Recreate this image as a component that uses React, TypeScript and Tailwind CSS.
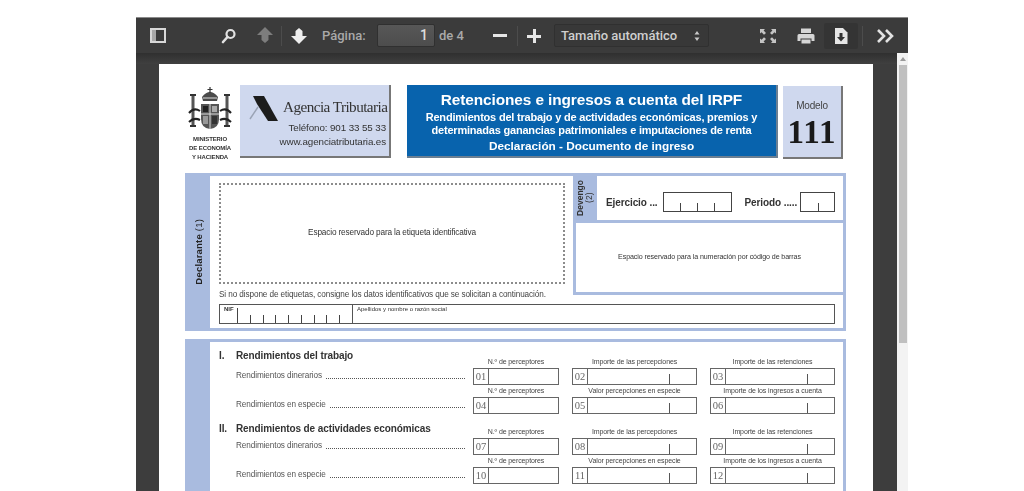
import { ReactNode } from 'react';

const band = 'bg-[#a9bbdf]';

function Sep() {
    return <div className="w-px h-[20px] bg-[#2a2a2a] border-r border-[#4c4c4c]"></div>;
}

function Toolbar() {
    return (
        <div className="relative z-10 h-[36px] shrink-0 flex items-center bg-[#3b3b3b] border-t border-[#8a8a8a] text-[#d4d4d4] font-['Roboto',sans-serif] font-medium whitespace-nowrap">
            <svg className="ml-[14px] w-[16px] h-[15px]" viewBox="0 0 16 15">
                <rect x="1" y="1" width="14" height="13" fill="none" stroke="#d8d8d8" strokeWidth="2" />
                <rect x="2" y="2" width="4" height="11" fill="#a8a8a8" />
            </svg>
            <svg className="ml-[55px] w-[16px] h-[16px]" viewBox="0 0 16 16">
                <circle cx="9.5" cy="6" r="4" fill="none" stroke="#e2e2e2" strokeWidth="2.2" />
                <path d="M6.5 9 L2 14" stroke="#e2e2e2" strokeWidth="2.6" strokeLinecap="round" />
            </svg>
            <svg className="ml-[20px] w-[16px] h-[17px]" viewBox="0 0 16 17">
                <path d="M8 0 L16 8 H11.5 V13 L8 16 L4.5 13 V8 H0 Z" fill="#7d7d7d" />
            </svg>
            <div className="ml-[8px]"><Sep /></div>
            <svg className="ml-[9px] w-[16px] h-[17px]" viewBox="0 0 16 17">
                <path d="M8 17 L16 9 H11.5 V4 L8 1 L4.5 4 V9 H0 Z" fill="#eeeeee" />
            </svg>
            <span className="ml-[15px] w-[45px] text-[13px] text-[#a9a9a9]">Página:</span>
            <div className="ml-[10px] w-[58px] h-[23px] bg-gradient-to-b from-[#575757] to-[#4d4d4d] border border-[#303030] rounded-[2px] flex items-center justify-end pr-[6px] text-[14px] text-[#dddddd]">1</div>
            <span className="ml-[4px] w-[25px] text-[13px] text-[#a9a9a9]">de 4</span>
            <div className="ml-[29px] w-[14px] h-[3px] bg-[#e6e6e6]"></div>
            <div className="ml-[10px]"><Sep /></div>
            <div className="ml-[9px] relative w-[14px] h-[14px]">
                <div className="absolute left-0 top-[6px] w-[14px] h-[3px] bg-[#e6e6e6]"></div>
                <div className="absolute left-[6px] top-0 w-[3px] h-[14px] bg-[#e6e6e6]"></div>
            </div>
            <div className="ml-[13px] w-[155px] h-[23px] bg-[#383838] border border-[#303030] rounded-[2px] flex items-center justify-between pl-[6px] pr-[8px]">
                <span className="text-[13px] text-[#cfcfcf]">Tamaño automático</span>
                <svg className="w-[6px] h-[10px]" viewBox="0 0 6 10">
                    <path d="M3 0 L5.5 3.5 H0.5 Z M3 10 L0.5 6.5 H5.5 Z" fill="#c8c8c8" />
                </svg>
            </div>
            <svg className="ml-[50px] w-[18px] h-[16px]" viewBox="0 0 18 16">
                <path d="M1 1 H6 L4.6 2.4 L7 5 L5 6.8 L2.6 4.2 L1 5.6 Z M17 1 H12 L13.4 2.4 L11 5 L13 6.8 L15.4 4.2 L17 5.6 Z M1 15 H6 L4.6 13.6 L7 11 L5 9.2 L2.6 11.8 L1 10.4 Z M17 15 H12 L13.4 13.6 L11 11 L13 9.2 L15.4 11.8 L17 10.4 Z" fill="#c4c4c4" />
            </svg>
            <svg className="ml-[20px] w-[18px] h-[16px]" viewBox="0 0 18 16">
                <path d="M4 0.5 H14 V5 H4 Z M2 6 H16 Q17.5 6 17.5 7.5 V13 H14.5 V10.5 H3.5 V13 H0.5 V7.5 Q0.5 6 2 6 Z M4.5 11.5 H13.5 V15.5 H4.5 Z" fill="#d6d6d6" />
            </svg>
            <div className="ml-[9px] w-[34px] h-[26px] bg-[#343434] rounded-[2px] flex items-center justify-center">
                <svg className="w-[14px] h-[16px]" viewBox="0 0 14 16">
                    <path d="M1 0 H9 L13.5 4.5 V16 H1 Z" fill="#e6e6e6" />
                    <path d="M5.5 5 H8.5 V9 H11 L7 13.5 L3 9 H5.5 Z" fill="#333333" />
                    <path d="M9.5 0 H13.5 V4 Z" fill="#343434" />
                </svg>
            </div>
            <div className="ml-[4px]"><Sep /></div>
            <svg className="ml-[14px] w-[17px] h-[14px]" viewBox="0 0 17 14">
                <path d="M1 1 L7 7 L1 13 M9 1 L15 7 L9 13" fill="none" stroke="#e2e2e2" strokeWidth="2.6" />
            </svg>
        </div>
    );
}

function Crest() {
    return (
        <svg className="w-[44px] h-[46px]" viewBox="0 0 44 46">
            <path d="M14 10 Q22 0 30 10 L29 14 H15 Z" fill="#4a4a4a" />
            <path d="M22 0 V6 M19.5 2.5 H24.5" stroke="#333333" strokeWidth="1.2" />
            <path d="M15 11 H29" stroke="#dddddd" strokeWidth="1" />
            <path d="M13 17 H31 V32 Q31 41 22 42 Q13 41 13 32 Z" fill="#555555" />
            <path d="M22 17 V42 M13 27 H31" stroke="#dddddd" strokeWidth="1" />
            <rect x="15" y="19" width="5" height="6" fill="#222222" />
            <rect x="24" y="19" width="5" height="6" fill="#aaaaaa" />
            <rect x="15" y="29" width="5" height="8" fill="#999999" />
            <rect x="24" y="29" width="5" height="8" fill="#333333" />
            <path d="M5 8 V38 M39 8 V38" stroke="#555555" strokeWidth="3" />
            <path d="M1 26 Q6 20 12 24 M43 26 Q38 20 32 24 M1 35 Q6 30 12 33 M43 35 Q38 30 32 33" fill="none" stroke="#222222" strokeWidth="2" />
            <path d="M2 8 H8 M36 8 H42 M2 39 H8 M36 39 H42" stroke="#333333" strokeWidth="2" />
        </svg>
    );
}

function Header() {
    return (
        <div className="flex items-start h-[75px]">
            <div className="w-[44px] ml-[29px] mt-[2px] flex flex-col items-center">
                <Crest />
                <div className="mt-[2px] text-center text-[6px] leading-[9px] font-semibold text-[#333333] whitespace-nowrap tracking-[-0.1px]">MINISTERIO<br />DE ECONOMÍA<br />Y HACIENDA</div>
            </div>
            <div className="ml-[8px] w-[151px] h-[73px] bg-[#cfd8ee] border-r-2 border-b-2 border-[#777777] pt-[12px] pr-[3px] relative">
                <svg className="absolute left-[9px] top-[10px] w-[30px] h-[27px]" viewBox="0 0 30 27">
                    <path d="M4 1 H15 L29 26 H19 L8 9 Z" fill="#1c1c1c" />
                    <path d="M9 12 L1 24" stroke="#9aa3b5" strokeWidth="1.5" />
                </svg>
                <div className="pl-[43px] text-[15.2px] leading-[20px] tracking-[-0.55px] text-[#333333] whitespace-nowrap font-['Liberation_Serif',serif]">Agencia Tributaria</div>
                <div className="mt-[4px] text-right text-[9.8px] leading-[14px] tracking-[-0.1px] text-[#333333] whitespace-nowrap">Teléfono: 901 33 55 33<br />www.agenciatributaria.es</div>
            </div>
            <div className="ml-[16px] w-[371px] h-[73px] bg-[#0863ad] border-r-2 border-b-2 border-[#6b7f92] text-white font-bold text-center pt-[4px] whitespace-nowrap">
                <div className="text-[15.4px] leading-[21px] tracking-[-0.1px]">Retenciones e ingresos a cuenta del IRPF</div>
                <div className="mt-[1px] text-[11px] leading-[12.5px] tracking-[-0.2px]">Rendimientos del trabajo y de actividades económicas, premios y<br />determinadas ganancias patrimoniales e imputaciones de renta</div>
                <div className="mt-[3px] text-[11.8px] leading-[15px]">Declaración - Documento de ingreso</div>
            </div>
            <div className="ml-[5px] mt-[1px] w-[60px] h-[73px] bg-[#cfd8ee] border-r-2 border-b-2 border-[#777777] text-center pt-[14px]">
                <div className="text-[10px] leading-[12px] text-[#444444] tracking-[-0.2px]">Modelo</div>
                <div className="mt-[3px] text-[33px] leading-[34px] font-bold tracking-[1px] text-[#1a1a1a] font-['Liberation_Serif',serif]">111</div>
            </div>
        </div>
    );
}

function Ticks({ count, first }: { count: number; first?: boolean }) {
    return (
        <div className="flex-1 flex h-full">
            {Array.from({ length: count }).map((_, i) => (
                <div key={i} className="flex-1 flex flex-col justify-end">
                    {i === 0
                        ? first && <div className="h-[15px] border-l border-[#444444]"></div>
                        : <div className="h-[8px] border-l border-[#444444]"></div>}
                </div>
            ))}
        </div>
    );
}

function Declarante() {
    return (
        <div className={`mt-[13px] ml-[26px] w-[661px] flex ${band} p-[3px]`}>
            <div className="w-[22px] flex items-center justify-center">
                <span className="[writing-mode:vertical-rl] rotate-180 text-[9.5px] font-bold text-[#222222] tracking-[0.2px] whitespace-nowrap">Declarante <span className="font-normal">(1)</span></span>
            </div>
            <div className="flex-1 h-[152px] bg-white pt-[7px] pl-[9px] pr-[6px]">
                <div className="flex h-[101px]">
                    <div className="w-[346px] shrink-0">
                        <div className="h-[101px] border-2 border-dotted border-[#8c8c8c] flex items-center justify-center text-[8.25px] text-[#333333] tracking-[-0.15px]">Espacio reservado para la etiqueta identificativa</div>
                    </div>
                    <div className="ml-[8px] -mt-[7px] -mr-[6px] flex-1 h-[119px] flex flex-col">
                        <div className={`h-[47px] flex ${band} pb-[3px]`}>
                            <div className="w-[24px] flex items-center justify-center">
                                <span className="[writing-mode:vertical-rl] rotate-180 text-[8.5px] leading-[9px] text-center font-bold text-[#333333]">Devengo<br /><span className="font-normal">(2)</span></span>
                            </div>
                            <div className="flex-1 bg-white flex items-center pt-[8px] pl-[9px] text-[10px] font-bold text-[#333333] tracking-[-0.1px] whitespace-nowrap">
                                <span>Ejercicio ...</span>
                                <div className="ml-[5px] w-[69px] h-[20px] border border-[#444444] flex"><Ticks count={4} /></div>
                                <span className="ml-[13px]">Periodo .....</span>
                                <div className="ml-[3px] w-[35px] h-[20px] border border-[#444444] flex"><Ticks count={2} /></div>
                            </div>
                        </div>
                        <div className="h-[69px] bg-white border-l-[3px] border-[#a9bbdf] flex items-center justify-center text-[7.1px] text-[#333333] tracking-[-0.1px]">Espacio reservado para la numeración por código de barras</div>
                        <div className={`h-[3px] ${band}`}></div>
                    </div>
                </div>
                <div className="mt-[5px] text-[8.2px] leading-[11px] text-[#444444] tracking-[-0.1px] whitespace-nowrap">Si no dispone de etiquetas, consigne los datos identificativos que se solicitan a continuación.</div>
                <div className="mt-[4px] w-[616px] h-[20px] border border-[#555555] flex">
                    <div className="w-[133px] border-r border-[#555555] flex">
                        <span className="w-[17px] pl-[4px] text-[6px] font-bold leading-[8px] text-[#333333]">NIF</span>
                        <div className="flex-1 flex"><Ticks count={9} first /></div>
                    </div>
                    <span className="pl-[4px] text-[6px] leading-[9px] text-[#333333]">Apellidos y nombre o razón social</span>
                </div>
            </div>
        </div>
    );
}

function Box({ caption, num, wide }: { caption: string; num: string; wide?: boolean }) {
    return (
        <div className={wide ? 'w-[125px] ml-[13px]' : 'w-[86px]'}>
            <div className="h-[12px] text-center text-[7px] leading-[12px] text-[#444444] tracking-[-0.1px] whitespace-nowrap">{caption}</div>
            <div className="h-[17px] border border-[#666666] flex">
                <div className="w-[15px] border-r border-[#666666] text-[10.5px] leading-[15px] text-center text-[#666666] font-['Liberation_Serif',serif]">{num}</div>
                {wide && (
                    <div className="flex-1 pr-[26px] flex justify-end items-end">
                        <div className="h-[10px] border-l border-[#555555]"></div>
                    </div>
                )}
            </div>
        </div>
    );
}

function Row({ label, caps, nums }: { label: string; caps: string[]; nums: string[] }) {
    return (
        <div className="flex items-end">
            <div className="w-[229px] mr-[8px] flex items-end pb-[4px]">
                <span className="text-[8.2px] leading-[11px] text-[#555555] tracking-[-0.1px] whitespace-nowrap">{label}</span>
                <div className="flex-1 ml-[4px] mb-[2px] border-b border-dotted border-[#555555]"></div>
            </div>
            <Box caption={caps[0]} num={nums[0]} />
            <Box caption={caps[1]} num={nums[1]} wide />
            <Box caption={caps[2]} num={nums[2]} wide />
        </div>
    );
}

function Title({ num, children }: { num: string; children: ReactNode }) {
    return (
        <div className="flex items-center -ml-[17px] text-[10px] leading-[14px] font-bold text-[#333333] tracking-[-0.1px] whitespace-nowrap">
            <span className="w-[17px]">{num}</span>
            <span>{children}</span>
        </div>
    );
}

const dinerarios = ['N.º de perceptores', 'Importe de las percepciones', 'Importe de las retenciones'];
const especie = ['N.º de perceptores', 'Valor percepciones en especie', 'Importe de los ingresos a cuenta'];

function Rendimientos() {
    return (
        <div className={`mt-[8px] ml-[26px] w-[661px] flex ${band} pt-[3px] pl-[3px] pr-[3px]`}>
            <div className="w-[22px]"></div>
            <div className="flex-1 h-[160px] bg-white pt-[7px] pl-[26px]">
                <Title num="I.">Rendimientos del trabajo</Title>
                <div className="-mt-[7px]"><Row label="Rendimientos dinerarios" caps={dinerarios} nums={['01', '02', '03']} /></div>
                <Row label="Rendimientos en especie" caps={especie} nums={['04', '05', '06']} />
                <div className="mt-[8px]"><Title num="II.">Rendimientos de actividades económicas</Title></div>
                <div className="-mt-[10px]"><Row label="Rendimientos dinerarios" caps={dinerarios} nums={['07', '08', '09']} /></div>
                <Row label="Rendimientos en especie" caps={especie} nums={['10', '11', '12']} />
            </div>
        </div>
    );
}

function Scrollbar() {
    return (
        <div className="w-[11px] bg-[#f3f3f3] flex flex-col items-center">
            <div className="h-[12px] flex items-center justify-center">
                <div className="w-0 h-0 border-x-[3px] border-x-transparent border-b-[4px] border-b-[#9a9a9a]"></div>
            </div>
            <div className="w-[8px] h-[278px] bg-[#c0c0c0]"></div>
        </div>
    );
}

export default function App() {
    return (
        <div className="w-[1024px] h-[491px] overflow-hidden bg-white pt-[17px] pl-[136px]">
            <div className="w-[772px] h-[474px] flex flex-col bg-[#3d3d3d]">
                <Toolbar />
                <div className="flex-1 flex min-h-0">
                    <div className="flex-1 min-w-0 pt-[11px] pl-[23px] pr-[24px] overflow-hidden bg-no-repeat bg-gradient-to-b from-[#2f2f2f] to-[#404040] [background-size:100%_11px]">
                        <div className="h-full bg-white pt-[21px] font-['Liberation_Sans',sans-serif] blur-[0.3px] overflow-hidden">
                            <Header />
                            <Declarante />
                            <Rendimientos />
                        </div>
                    </div>
                    <Scrollbar />
                </div>
            </div>
        </div>
    );
}
